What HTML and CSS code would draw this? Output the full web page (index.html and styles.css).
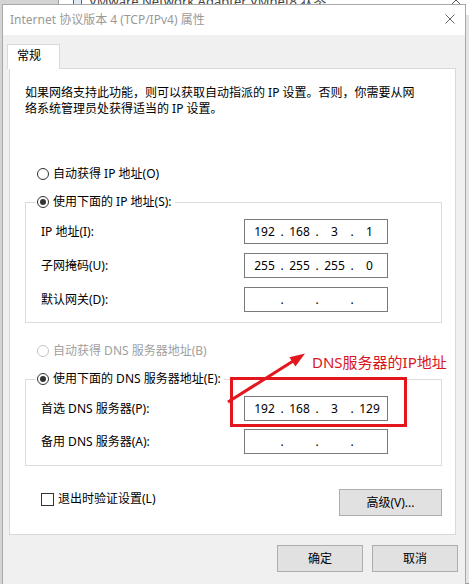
FILE: index.html
```html
<!DOCTYPE html>
<html lang="zh-CN">
<head>
<meta charset="utf-8">
<title>Internet 协议版本 4 (TCP/IPv4) 属性</title>
<link rel="stylesheet" href="styles.css">
</head>
<body>
<div class="bg-window">
  <div class="bg-title">
    <svg class="bg-icon" width="9" height="10" viewBox="0 0 9 10"><rect x="0.5" y="0.5" width="8" height="9" fill="#dfe8f3" stroke="#4a6a8f"/></svg>
    <span class="bg-text">VMware Network Adapter VMnet8 状态</span>
    <svg class="bg-close" width="10" height="10" viewBox="0 0 10 10"><path d="M0 0L10 10M10 0L0 10" stroke="#555" stroke-width="1"/></svg>
  </div>
</div>

<div class="dialog">
  <div class="titlebar">
    <span class="title">Internet 协议版本 4 (TCP/IPv4) 属性</span>
    <svg class="close" width="10" height="10" viewBox="0 0 10 10"><path d="M0.5 0.5L9.5 9.5M9.5 0.5L0.5 9.5" stroke="#666" stroke-width="1"/></svg>
  </div>
  <div class="client">
    <div class="tabs"><div class="tab">常规</div></div>
    <div class="panel">
      <p class="intro">如果网络支持此功能，则可以获取自动指派的 IP 设置。否则，你需要从网<br>络系统管理员处获得适当的 IP 设置。</p>

      <div class="radio-row first"><span class="radio"></span><span>自动获得 IP 地址(O)</span></div>

      <fieldset class="group">
        <legend><span class="legend-inner"><span class="radio checked"></span><span>使用下面的 IP 地址(S):</span></span></legend>
        <div class="field-row">
          <span class="label">IP 地址(I):</span>
          <div class="ipbox"><span>192</span><i>.</i><span>168</span><i>.</i><span>3</span><i>.</i><span>1</span></div>
        </div>
        <div class="field-row">
          <span class="label">子网掩码(U):</span>
          <div class="ipbox"><span>255</span><i>.</i><span>255</span><i>.</i><span>255</span><i>.</i><span>0</span></div>
        </div>
        <div class="field-row">
          <span class="label">默认网关(D):</span>
          <div class="ipbox"><span></span><i>.</i><span></span><i>.</i><span></span><i>.</i><span></span></div>
        </div>
      </fieldset>

      <div class="radio-row disabled"><span class="radio off"></span><span>自动获得 DNS 服务器地址(B)</span></div>

      <fieldset class="group dns">
        <legend><span class="legend-inner"><span class="radio checked"></span><span>使用下面的 DNS 服务器地址(E):</span></span></legend>
        <div class="field-row">
          <span class="label">首选 DNS 服务器(P):</span>
          <div class="ipbox"><span>192</span><i>.</i><span>168</span><i>.</i><span>3</span><i>.</i><span>129</span></div>
        </div>
        <div class="field-row">
          <span class="label">备用 DNS 服务器(A):</span>
          <div class="ipbox"><span></span><i>.</i><span></span><i>.</i><span></span><i>.</i><span></span></div>
        </div>
      </fieldset>

      <div class="bottom-row">
        <label class="check"><span class="checkbox"></span><span>退出时验证设置(L)</span></label>
        <button class="btn adv">高级(V)...</button>
      </div>
    </div>
    <div class="footer">
      <button class="btn">确定</button>
      <button class="btn">取消</button>
    </div>
  </div>
</div>

<svg class="annot" width="469" height="584" viewBox="0 0 469 584">
  <rect x="231.5" y="378.5" width="174" height="47" fill="none" stroke="#e3161d" stroke-width="3"/>
  <line x1="228" y1="402" x2="294" y2="360.5" stroke="#e3161d" stroke-width="3"/>
  <polygon points="305,353.5 289.4,357.2 295.4,366.6" fill="#e3161d"/>
</svg>
<div class="annot-text">DNS服务器的IP地址</div>
</body>
</html>
```

FILE: styles.css
```css
* {
  box-sizing: border-box;
}

html,
body {
  margin: 0;
  width: 469px;
  height: 584px;
  overflow: hidden;
}

body {
  position: relative;
  font-family: "Noto Sans", "Noto Sans CJK SC", sans-serif;
  font-size: 12px;
  color: #000;
  background: #d4d4d4;
}

/* window behind the dialog */
.bg-window {
  position: absolute;
  left: 58px;
  top: -16px;
  width: 411px;
  height: 600px;
  background: #e4e4e4;
  border: 1px solid #9c9c9c;
  border-right: none;
}

.bg-title {
  height: 30px;
  background: #fff;
  display: flex;
  align-items: center;
  padding-left: 14px;
  gap: 7px;
  font-size: 13px;
  color: #444;
}

.bg-close {
  margin-left: auto;
  margin-right: 8px;
}

/* dialog */
.dialog {
  position: absolute;
  left: 2px;
  top: 4px;
  width: 464px;
  height: 580px;
  border: 1px solid #a9a9a9;
  border-bottom: none;
  background: #f0f0f0;
}

.titlebar {
  height: 30px;
  background: #fff;
  display: flex;
  align-items: center;
  justify-content: space-between;
  padding: 0 10px 0 7px;
}

.title {
  color: #999;
  line-height: 16px;
}

.close {
  margin-top: -2px;
}

.client {
  padding: 9px 9px 0 6px;
}

.tabs {
  display: flex;
}

.tab {
  position: relative;
  z-index: 1;
  margin-left: -2px;
  margin-bottom: -1px;
  width: 53px;
  height: 25px;
  padding: 3px 0 0 9px;
  line-height: 16px;
  background: #fff;
  border: 1px solid #d9d9d9;
  border-bottom: none;
}

.panel {
  background: #fff;
  border: 1px solid #d9d9d9;
  padding: 16px 13px 18px 15px;
}

.intro {
  margin: 0;
  line-height: 16px;
  white-space: nowrap;
}

.radio-row {
  display: flex;
  align-items: center;
  gap: 4px;
  height: 16px;
  line-height: 16px;
  padding-left: 12px;
}

.radio-row.first {
  margin-top: 49px;
}

.radio-row.disabled {
  margin-top: 20px;
  color: #a0a0a0;
}

.radio {
  flex: none;
  width: 12px;
  height: 12px;
  border: 1px solid #333;
  border-radius: 50%;
  background: #fff;
  display: flex;
  align-items: center;
  justify-content: center;
}

.radio.checked::after {
  content: "";
  width: 6px;
  height: 6px;
  border-radius: 50%;
  background: #333;
}

.radio.off {
  border-color: #c4c4c4;
}

.group {
  margin: 12px 0 0;
  min-width: 0;
  border: 1px solid #dcdcdc;
  padding: 9px 0 10px 10px;
}

.group legend {
  padding: 0 3px 0 1px;
  line-height: 16px;
}

.legend-inner {
  display: flex;
  align-items: center;
  gap: 4px;
  height: 16px;
}

.field-row {
  display: flex;
  align-items: center;
  padding-left: 5px;
}

.field-row + .field-row {
  margin-top: 9px;
}

.group.dns {
  padding-bottom: 11px;
}

.group.dns .field-row + .field-row {
  margin-top: 8px;
}

.label {
  flex: none;
  width: 203px;
  line-height: 16px;
}

.ipbox {
  width: 144px;
  height: 25px;
  border: 1px solid #7a7a7a;
  background: #fff;
  display: grid;
  grid-template-columns: 31px 4px 31px 4px 31px 4px 31px;
  align-items: center;
  padding-left: 4px;
  line-height: 16px;
}

.ipbox span,
.ipbox i {
  font-style: normal;
  text-align: center;
}

.bottom-row {
  display: flex;
  justify-content: space-between;
  align-items: flex-start;
  margin-top: 23px;
}

.check {
  display: flex;
  align-items: center;
  gap: 4px;
  padding-left: 16px;
  margin-top: 2px;
  line-height: 16px;
}

.checkbox {
  flex: none;
  width: 13px;
  height: 13px;
  border: 1px solid #333;
  background: #fff;
}

.btn {
  font: inherit;
  color: #000;
  background: #e1e1e1;
  border: 1px solid #adadad;
  height: 27px;
  padding: 0;
  line-height: 16px;
}

.adv {
  width: 103px;
}

.footer {
  display: flex;
  justify-content: flex-end;
  gap: 9px;
  margin-top: 10px;
  margin-right: -2px;
}

.footer .btn {
  width: 86px;
}

/* red annotation over the screenshot */
.annot {
  position: absolute;
  left: 0;
  top: 0;
  pointer-events: none;
}

.annot-text {
  position: absolute;
  left: 312px;
  top: 352px;
  font-size: 15px;
  line-height: 20px;
  color: #d9161e;
  white-space: nowrap;
}
```
